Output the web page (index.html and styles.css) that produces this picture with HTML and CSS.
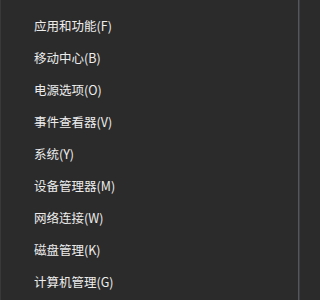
FILE: index.html
```html
<!DOCTYPE html>
<html lang="zh-CN">
<head>
<meta charset="utf-8">
<link rel="stylesheet" href="styles.css">
</head>
<body>
<div class="menu">
  <ul class="list">
    <li class="item">应用和功能(F)</li>
    <li class="item">移动中心(B)</li>
    <li class="item">电源选项(O)</li>
    <li class="item">事件查看器(V)</li>
    <li class="item">系统(Y)</li>
    <li class="item">设备管理器(M)</li>
    <li class="item">网络连接(W)</li>
    <li class="item">磁盘管理(K)</li>
    <li class="item">计算机管理(G)</li>
  </ul>
  <div class="edge"></div>
</div>
</body>
</html>
```

FILE: styles.css
```css
html, body {
  margin: 0;
  padding: 0;
  background: #2b2b2b;
}
.menu {
  width: 300px;
  height: 300px;
  box-sizing: border-box;
  border-left: 1px solid #393939;
  display: flex;
  background: #2b2b2b;
  overflow: hidden;
}
.list {
  list-style: none;
  margin: 0;
  padding: 10px 0 0 33px;
  flex: 1;
}
.item {
  height: 32px;
  line-height: 32px;
  font-family: "Noto Sans CJK SC", "Noto Sans", sans-serif;
  font-size: 12.5px;
  color: #ededed;
  white-space: nowrap;
}
.edge {
  width: 1px;
  background: #53565a;
  border-right: 1px solid #3d3e41;
}
```
